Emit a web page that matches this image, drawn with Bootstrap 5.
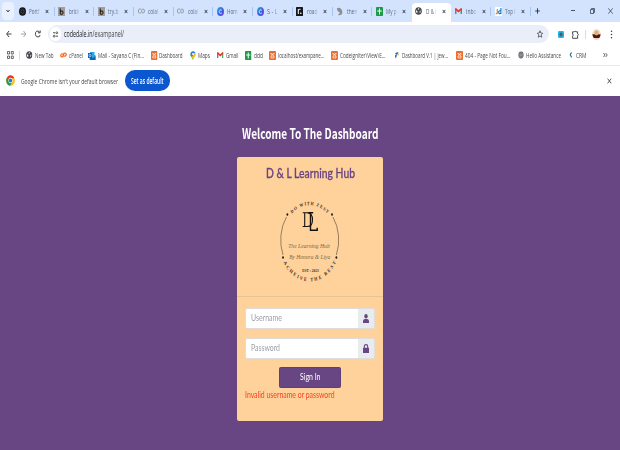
<!DOCTYPE html>
<html lang="en">
<head>
<meta charset="utf-8">
<meta name="viewport" content="width=device-width, initial-scale=1">
<title>D &amp; L Learning Hub</title>
<link rel="stylesheet" href="https://cdn.jsdelivr.net/npm/bootstrap@5.3.0/dist/css/bootstrap.min.css">
<style>
body{width:620px;height:450px;overflow:hidden;background:#684583;font:8px/10px "Open Sans","Noto Sans",sans-serif;color:#45484d}
svg{display:block;flex:none;overflow:visible}
.fit{display:block;flex:none;white-space:nowrap;text-align:left}
.fit>span{display:inline-block;transform-origin:0 50%;white-space:nowrap}
.tabstrip{height:22px;background:#d3e3fd}
.tabmenu{width:12px;height:18px;margin:0 1px 0 2px;border-radius:4px;background:#e9f0fe}
.btab{width:39.7px;height:18px;padding-left:3.5px;position:relative;flex:none}
.btab .fit{margin-left:3.5px;color:#566784;-webkit-mask-image:linear-gradient(90deg,#000 60%,#0004)}
.btab .cross{margin-left:5.5px}
.btab.line::after{content:"";width:1px;height:9px;background:#a9c5f3;position:absolute;right:0;top:5px}
.btab.current{background:#fff;border-radius:4px 4px 0 0;width:38.7px;margin-right:1px;height:19px;align-self:flex-end;padding-bottom:3px}
.toolbar-row{height:23px;background:#fff;padding-top:1px}
.address{width:501px;height:18px;margin-left:7px;border-radius:9px;background:#e9eef8}
.site{width:11px;height:14px;border-radius:7px;background:#fff;margin-left:2px}
.path-text{margin-left:2.5px;font-size:9px}
.path-text b{color:#202327}
.marks{height:21px;background:#fff;border-bottom:1px solid #e6e9ee;display:grid;align-items:center;padding-left:7px;
grid-template-columns:12px 7px 34px 28px 62.5px 39.5px 27px 28px 24px 62px 63px 61.5px 62px 51px 34px 10px}
.marks>div{display:flex;align-items:center;gap:2px}
.infobar{height:29.5px;background:#fff}
.setdef{width:45px;height:21px;border-radius:10px;background:#0b57d0;color:#fff;margin-left:7px}
.welcome{font:700 13.8px/18px "Noto Sans CJK SC",sans-serif;color:#fff;margin-top:28px}
.login{width:145.5px;height:264px;margin:15px auto 0 237.3px;background:#ffd29b;border-radius:2px;font-family:Lato,sans-serif}
.brand{height:140px;border-bottom:1px solid #e8c294}
.hub{font:500 12.5px/16px Lato,sans-serif;color:#684583;-webkit-text-stroke:.3px #684583;padding-top:9.5px}
.field{width:129.5px;height:21px;border:1px solid #dfdcda;border-radius:2px;background:#fff;font-size:9.5px;color:#999fa6;margin-left:8px;overflow:hidden}
.addon{width:16px;background:#e9ecef;color:#684583}
.field .fit{margin-left:4.5px}
.first{margin-top:11px}
.second{margin-top:9px}
.signin{width:62px;height:20.5px;border-radius:1.5px;background:#684583;border:1px solid #5f3f79;color:#fff;font-size:9.5px;margin:8.500px 0 0 41.5px}
.wrong{font-size:9.8px;line-height:12px;color:#fb3c20;margin:.5px 0 0 8px}
</style>
</head>
<body>
<svg width="0" height="0" class="position-absolute">
<defs>
<symbol id="x" viewBox="0 0 8 10"><path d="M1.400 1.800l5.200 6.400M6.600 1.800L1.400 8.200" stroke="#2c313a" stroke-width="1.700" fill="none"/></symbol>
<symbol id="globe" viewBox="0 0 14 16" preserveAspectRatio="none"><ellipse cx="7" cy="8" rx="6.700" ry="7.600" fill="#45494e"/><path d="M2.500 6l2.500 2.500v2.500l-1.500 1C2 10 2 8 2.500 6zM6.500 2.500h2l-1 2.500-2 1zM9.500 8l2-1-.7 4-1.500 1z" fill="#fff"/></symbol>
<symbol id="b" viewBox="0 0 14 18" preserveAspectRatio="none"><rect width="14" height="18" fill="#a39e98"/><path d="M4.500 3v11M4.500 9q5.500-3 5.500 2t-5.500 3" stroke="#1e1b1a" stroke-width="2.200" fill="none"/></symbol>
<symbol id="co" viewBox="0 0 16 12" preserveAspectRatio="none"><path d="M7 2.500Q1 0 1 6t6 3.500" fill="none" stroke="#8d9197" stroke-width="1.800"/><ellipse cx="11.500" cy="6" rx="3.300" ry="4" fill="none" stroke="#8d9197" stroke-width="1.800"/></symbol>
<linearGradient id="cg" x1="0" y1="0" x2="1" y2="1"><stop stop-color="#17b8d4"/><stop offset=".55" stop-color="#3f62e0"/><stop offset="1" stop-color="#7b2de0"/></linearGradient>
<symbol id="canva" viewBox="0 0 14 18" preserveAspectRatio="none"><ellipse cx="7" cy="9" rx="7" ry="9" fill="url(#cg)"/><path d="M9.500 6.500Q8 4 5.800 6.500T5.500 12t4.300-.5" fill="none" stroke="#fff" stroke-width="1.500"/></symbol>
<symbol id="sheet" viewBox="0 0 14 18" preserveAspectRatio="none"><rect width="14" height="18" rx="1.500" fill="#1e9a49"/><path d="M7 3v12M2.500 8h9" stroke="#fff" stroke-width="2"/></symbol>
<symbol id="gm" viewBox="0 0 14 13" preserveAspectRatio="none"><path d="M0 2v11h3V6z" fill="#4285f4"/><path d="M14 2v11h-3V6z" fill="#34a853"/><path d="M0 1l2-1 5 5 5-5 2 1v3L7 10 0 4z" fill="#e33b2e"/></symbol>
<symbol id="xm" viewBox="0 0 14 18" preserveAspectRatio="none"><rect width="14" height="18" rx="2" fill="#ec6d2d"/><path d="M4 4.500l6 4.500M10 4.500L4 9M4 4v3M10 4v3M4 10h6v4H4z" stroke="#fff" stroke-width="1.300" fill="none"/></symbol>
</defs></svg>

<header>
<div class="tabstrip d-flex align-items-center">
 <div class="tabmenu d-flex align-items-center justify-content-center"><svg width="4" height="4" viewBox="0 0 4 4"><path d="M.5 1L2 2.800 3.500 1" fill="none" stroke="#1f2329" stroke-width="1"/></svg></div>
 <div class="btab line d-flex align-items-center"><svg width="7" height="9" viewBox="0 0 7 9"><ellipse cx="3.500" cy="4.500" rx="3.500" ry="4.300" fill="#15181c"/><ellipse cx="3.500" cy="4.500" rx="1.500" ry="2" fill="none" stroke="#596069" stroke-width=".6"/></svg><div class="fit" data-w="10.500">Portf</div><svg class="cross" width="4" height="5"><use href="#x"/></svg></div>
 <div class="btab line d-flex align-items-center"><svg width="7" height="9"><use href="#b"/></svg><div class="fit" data-w="10.500">brick</div><svg class="cross" width="4" height="5"><use href="#x"/></svg></div>
 <div class="btab line d-flex align-items-center"><svg width="7" height="9"><use href="#b"/></svg><div class="fit" data-w="10.500">try.b</div><svg class="cross" width="4" height="5"><use href="#x"/></svg></div>
 <div class="btab line d-flex align-items-center"><svg width="7" height="6"><use href="#co"/></svg><div class="fit" data-w="10.500">colal</div><svg class="cross" width="4" height="5"><use href="#x"/></svg></div>
 <div class="btab line d-flex align-items-center"><svg width="7" height="6"><use href="#co"/></svg><div class="fit" data-w="10.500">colal</div><svg class="cross" width="4" height="5"><use href="#x"/></svg></div>
 <div class="btab line d-flex align-items-center"><svg width="7" height="9"><use href="#canva"/></svg><div class="fit" data-w="10.500">Hom</div><svg class="cross" width="4" height="5"><use href="#x"/></svg></div>
 <div class="btab line d-flex align-items-center"><svg width="7" height="9"><use href="#canva"/></svg><div class="fit" data-w="10.500">S - L</div><svg class="cross" width="4" height="5"><use href="#x"/></svg></div>
 <div class="btab line d-flex align-items-center"><svg width="7" height="9" viewBox="0 0 7 9"><rect width="7" height="9" rx=".6" fill="#16191d"/><path d="M2.300 2v5M2.300 3.200Q3 2 4.500 2.300" stroke="#fff" fill="none"/><circle cx="4.800" cy="6.300" r=".8" fill="#fff"/></svg><div class="fit" data-w="10.500">road</div><svg class="cross" width="4" height="5"><use href="#x"/></svg></div>
 <div class="btab line d-flex align-items-center"><svg width="7" height="9" viewBox="0 0 7 9"><path d="M.8 1.500Q3-.3 5 1.800 7 4 6.300 6.500 5 9 2 8l2-2.500Q2 5 1.500 3.800z" fill="#8c8f93"/></svg><div class="fit" data-w="10.500">then</div><svg class="cross" width="4" height="5"><use href="#x"/></svg></div>
 <div class="btab d-flex align-items-center"><svg width="7" height="9"><use href="#sheet"/></svg><div class="fit" data-w="10.500">My p</div><svg class="cross" width="4" height="5"><use href="#x"/></svg></div>
 <div class="btab current d-flex align-items-center"><svg width="7" height="8"><use href="#globe"/></svg><div class="fit" data-w="10.500">D &amp; l</div><svg class="cross" width="4" height="5"><use href="#x"/></svg></div>
 <div class="btab line d-flex align-items-center"><svg width="7" height="6"><use href="#gm"/></svg><div class="fit" data-w="10.500">Inbo</div><svg class="cross" width="4" height="5"><use href="#x"/></svg></div>
 <div class="btab line d-flex align-items-center"><svg width="7" height="9" viewBox="0 0 7 9"><rect width="7" height="9" rx="1" fill="#fff"/><path d="M2.300 2v4Q2 7 .7 6.500" stroke="#f37a20" stroke-width="1.200" fill="none"/><path d="M5.900 1v6M5.900 4Q3.600 3.300 3.600 5.200T5.900 6.500" stroke="#1274c0" stroke-width="1.100" fill="none"/></svg><div class="fit" data-w="10.500">Top I</div><svg class="cross" width="4" height="5"><use href="#x"/></svg></div>
 <svg class="ms-1" width="5" height="6" viewBox="0 0 5 6"><path d="M2.500 .3v5.400M.2 3h4.600" stroke="#2c313a" stroke-width=".9"/></svg>
 <svg class="ms-auto" width="4" height="6" viewBox="0 0 4 6"><path d="M0 2.500h4" stroke="#2c313a" stroke-width=".8"/></svg>
 <svg style="margin-left:15px" width="5" height="6" viewBox="0 0 5 6"><path d="M.5 1.500h3v4h-3zM1.500 1.200V.5h3v4h-.8" stroke="#2c313a" stroke-width=".7" fill="none"/></svg>
 <svg style="margin:0 7px 0 13px" width="5" height="6" viewBox="0 0 5 6"><path d="M.3 .3l4.400 5.400M4.700 .3L.3 5.700" stroke="#2c313a" stroke-width=".7"/></svg>
</div>

<div class="toolbar-row d-flex align-items-center">
 <svg width="41" height="10" viewBox="0 0 41 10" fill="none" stroke-width="1"><path d="M11.500 5H6.800M9 2L6.700 5 9 8" stroke="#3e4247"/><path d="M21 5h4.800M23.500 2l2.300 3-2.300 3" stroke="#a0a3a8"/><path d="M39.700 3.200Q38 1.300 36.500 2.300 35.200 3.200 35.400 5.500 36 8.200 38 8T40 6M40.200 1.500v2.300h-2.300" stroke="#3e4247"/></svg>
 <div class="address d-flex align-items-center"><div class="site d-flex align-items-center justify-content-center"><svg width="5" height="7" viewBox="0 0 5 7"><path d="M0 1.800h2.200M2.800 5.200H5" stroke="#33373c" stroke-width=".9"/><circle cx="3.800" cy="1.800" r=".9" fill="none" stroke="#33373c" stroke-width=".8"/><circle cx="1.200" cy="5.200" r=".9" fill="none" stroke="#33373c" stroke-width=".8"/></svg></div>
 <div class="fit path-text" data-w="60"><b class="fw-normal">codedale.in</b>/exampanel/</div>
 <svg class="ms-auto" style="margin-right:6px" width="6" height="8" viewBox="0 0 12 16"><path d="M6 1.500l1.500 4.500 4 .4-3 3.200 1 4.900L6 12l-3.500 2.500 1-4.900-3-3.200 4-.4z" fill="none" stroke="#33373c" stroke-width="1.400"/></svg></div>
 <svg style="margin-left:8.500px" width="6" height="7" viewBox="0 0 6 7"><rect width="6" height="7" rx="1.200" fill="#21b5e8"/><ellipse cx="3" cy="3.600" rx="1.600" ry="2" fill="#5c5560"/></svg>
 <svg style="margin-left:8px" width="7" height="9" viewBox="0 0 7 9"><path d="M.6 1.800h1.800Q3 .2 4 1.800h1.600v2Q7 4.500 5.600 5.800v2.500h-5V6.200Q2 5 .6 4z" fill="none" stroke="#33373c" stroke-width=".9"/></svg>
 <div style="width:1px;height:9px;background:#cfdcf3;margin:0 6px"></div>
 <svg width="9" height="11" viewBox="0 0 9 11"><defs><clipPath id="av"><ellipse cx="4.500" cy="5.500" rx="4.300" ry="5.400"/></clipPath></defs><g clip-path="url(#av)"><rect width="9" height="11" fill="#f4ddb7"/><path d="M0 5.500Q4.500 4.500 9 5.500L7 9.500H2z" fill="#4d1419"/><ellipse cx="4.500" cy="4" rx="2.200" ry="2.400" fill="#dcae86"/><path d="M2 9h5v2H2z" fill="#f1d2c5"/></g></svg>
 <svg style="margin-left:9px" width="3" height="9" viewBox="0 0 3 9"><g fill="#33373c"><circle cx="1.500" cy="1.200" r=".75"/><circle cx="1.500" cy="4.500" r=".75"/><circle cx="1.500" cy="7.800" r=".75"/></g></svg>
</div>

<nav class="marks">
 <div><svg width="7" height="8" viewBox="0 0 7 8"><path d="M.5.5h2v2.500h-2zM4.300.5h2v2.500h-2zM.5 5h2v2.500h-2zM4.300 5h2v2.500h-2z" fill="none" stroke="#44484d" stroke-width=".8"/></svg></div>
 <div><i style="width:1px;height:9px;background:#cfdcf3"></i></div>
 <div><svg width="6.500" height="8"><use href="#globe"/></svg><div class="fit" data-w="18.500">New Tab</div></div>
 <div><svg width="7" height="8" viewBox="0 0 7 8"><path d="M3 3Q1 2.300.8 4.300T2.800 5.800L4 2.300Q6.300 1.500 6.200 3.500T3.800 5" fill="none" stroke="#fb6a21" stroke-width="1.300"/></svg><div class="fit" data-w="14">cPanel</div></div>
 <div><svg width="7.500" height="9" viewBox="0 0 7.500 9"><path d="M2 1h4.500v3h1v5H1.500z" fill="#28a8ea"/><path d="M2 5l3 2 2.500-2v4H2z" fill="#1066b5"/><rect y="2" width="4" height="5" fill="#0a62bc"/><ellipse cx="2" cy="4.500" rx="1" ry="1.300" stroke="#fff" stroke-width=".6" fill="none"/></svg><div class="fit" data-w="46">Mail - Sayana C (Fin...</div></div>
 <div><svg width="6.500" height="9"><use href="#xm"/></svg><div class="fit" data-w="23.500">Dashboard</div></div>
 <div><svg width="6" height="9" viewBox="0 0 6 9"><path d="M3 9L1.500 6Q-.5 3.500.7 1.500L3 3z" fill="#1da653"/><path d="M.7 1.600Q3-1 5.300 1.500L3 4z" fill="#2a79ee"/><path d="M5.300 1.500Q6.500 4 4.500 6L3 9 1.700 6z" fill="#f5b91b"/><circle cx="3" cy="3" r="1" fill="#fff"/></svg><div class="fit" data-w="12">Maps</div></div>
 <div><svg width="6.500" height="6"><use href="#gm"/></svg><div class="fit" data-w="12.500">Gmail</div></div>
 <div><svg width="6.500" height="9"><use href="#sheet"/></svg><div class="fit" data-w="9">ddd</div></div>
 <div><svg width="7" height="9"><use href="#xm"/></svg><div class="fit" data-w="46.500">localhost/exampane...</div></div>
 <div><svg width="7" height="9"><use href="#xm"/></svg><div class="fit" data-w="45.500">CodeIgniter\View\E...</div></div>
 <div><svg width="6" height="8" viewBox="0 0 6 8"><path d="M1 3Q2 .5 4.500 1.500L3 4z" fill="#1576b8"/><path d="M3 3.500l2-1.500-.6 3z" fill="#f6b72a"/><path d="M1 4l2 .5L1.500 7.500z" fill="#174d76"/></svg><div class="fit" data-w="46">Dashboard V.1 | jew...</div></div>
 <div><svg width="7" height="9"><use href="#xm"/></svg><div class="fit" data-w="45.500">404 - Page Not Fou...</div></div>
 <div><svg width="6" height="8" viewBox="0 0 6 8"><ellipse cx="3" cy="4" rx="2.600" ry="3.400" fill="#62666b"/><path d="M3 1v6M.7 4h4.600M1.500 2Q3 4 1.500 6M4.500 2Q3 4 4.500 6" fill="none" stroke="#c7c9cb" stroke-width=".35"/></svg><div class="fit" data-w="35">Hello Assistance</div></div>
 <div><svg width="5" height="6" viewBox="0 0 5 6"><path d="M3 .8Q.8 1.500 1.500 3.200T3 5.200" fill="none" stroke="#277a8e" stroke-width="1.200"/></svg><div class="fit" data-w="10.500">CRM</div></div>
 <div><svg width="5" height="6" viewBox="0 0 5 6"><path d="M.5 1l1.500 2L.5 5M2.700 1l1.500 2-1.500 2" fill="none" stroke="#44484d" stroke-width=".8"/></svg></div>
</nav>

<div class="infobar d-flex align-items-center">
 <svg style="margin:0 6px 0 6px" width="9" height="11" viewBox="0 0 9 11"><g transform="scale(.9 1.100)"><circle cx="5" cy="5" r="4.800" fill="#fbc116"/><path d="M5 5L.8 2.700A4.800 4.800 0 0 1 9.300 2.900H5z" fill="#e33b2e"/><path d="M5 5L.8 2.600A4.800 4.800 0 0 0 4.600 9.800L7 6z" fill="#229a48"/><circle cx="5" cy="5" r="2.400" fill="#fff"/><circle cx="5" cy="5" r="1.800" fill="#1a73e8"/></g></svg>
 <div class="fit" data-w="97">Google Chrome isn't your default browser</div>
 <div class="setdef d-flex align-items-center justify-content-center"><div class="fit fw-semibold" data-w="32.500">Set as default</div></div>
 <svg class="ms-auto" style="margin-right:8px" width="5" height="6" viewBox="0 0 5 6"><path d="M.6 .6l3.600 4.800M4.200 .6L.6 5.400" stroke="#33373c" stroke-width=".8"/></svg>
</div>
</header>

<main>
<div class="welcome d-flex justify-content-center"><div class="fit" data-w="136.500">Welcome To The Dashboard</div></div>
<section class="login">
 <div class="brand">
  <div class="hub d-flex justify-content-center"><div class="fit" data-w="89">D &amp; L Learning Hub</div></div>
  <svg width="145" height="100" viewBox="237.300 182 145 100">
   <g transform="translate(310 241) scale(.762 1)" font-family="Liberation Serif,serif" fill="#33291d">
    <path id="up" d="M-36 0A36 36 0 0 1 36 0" fill="none"/>
    <path id="down" d="M-40.500 0A40.500 40.500 0 0 0 40.500 0" fill="none"/>
    <path d="M-30.500-24A38.500 38.500 0 0 0-35 14M30.500-24A38.500 38.500 0 0 1 35 14" fill="none" stroke="#6b573d" stroke-width=".8"/>
    <g fill="#1d1812"><circle cx="-29.300" cy="-26.500" r="1.200"/><circle cx="29.300" cy="-26.500" r="1.200"/><circle cx="-35" cy="16.500" r="1.200"/><circle cx="35" cy="16.500" r="1.200"/></g>
    <text font-size="5" font-weight="700" textLength="51"><textPath href="#up" startOffset="50%" text-anchor="middle" textLength="51">DO WITH ZEST</textPath></text>
    <text font-size="5.300" font-weight="700" textLength="82"><textPath href="#down" startOffset="50%" text-anchor="middle" textLength="82">ACHEIVE THE BEST</textPath></text>
   </g>
   <g fill="none" stroke="#15110c"><path d="M303 212.800h5M303 226.500h5M305 213V226.500" stroke-width="1.100"/><path d="M307.500 212.800Q312.800 213 312.800 219.800T307.500 226.500" stroke-width="1.100"/><path d="M308.500 212.800h5M310.800 213v17.200h6.700v-2.500" stroke-width="1.400"/></g>
   <g font-family="Liberation Serif,serif" font-style="italic" font-size="6.500" fill="#7d6649"><text x="288.500" y="248.300" textLength="41.500" lengthAdjust="spacingAndGlyphs">The Learning Hub</text><text x="289.500" y="259.300" textLength="41" lengthAdjust="spacingAndGlyphs">By Honora &amp; Liya</text></g>
   <text x="302.500" y="272" font-family="Liberation Serif,serif" font-weight="700" font-size="4" textLength="16.500" lengthAdjust="spacingAndGlyphs" fill="#3b2e20">EST : 2023</text>
  </svg>
 </div>
 <div class="field first d-flex align-items-stretch"><div class="fit align-self-center" data-w="31">Username</div><div class="addon ms-auto d-flex align-items-center justify-content-center"><svg width="6" height="9" viewBox="0 0 6 9"><ellipse cx="3" cy="2.300" rx="1.700" ry="2.200" fill="currentColor"/><path d="M0 9V7Q.2 5 2 5h2q1.800 0 2 2v2z" fill="currentColor"/></svg></div></div>
 <div class="field second d-flex align-items-stretch"><div class="fit align-self-center" data-w="29">Password</div><div class="addon ms-auto d-flex align-items-center justify-content-center"><svg width="6" height="9" viewBox="0 0 6 9"><rect y="3.800" width="6" height="5.200" rx=".6" fill="currentColor"/><path d="M1.300 4V2.500Q1.300.6 3 .6t1.700 1.900V4" fill="none" stroke="currentColor" stroke-width="1.100"/></svg></div></div>
 <div class="signin d-flex align-items-center justify-content-center"><div class="fit" data-w="20.500">Sign In</div></div>
 <div class="wrong fit" data-w="89.500">Invalid username or password</div>
</section>
</main>
<script>
// Squeeze every label horizontally to its own column width.
document.querySelectorAll('.fit').forEach(function(el){
  var s=document.createElement('span');
  while(el.firstChild)s.appendChild(el.firstChild);
  el.appendChild(s);
  var w=parseFloat(el.dataset.w),n=s.getBoundingClientRect().width;
  s.style.transform='scaleX('+w/n+')';
  el.style.width=w+'px';
});
</script>
<script src="https://cdn.jsdelivr.net/npm/bootstrap@5.3.0/dist/js/bootstrap.bundle.min.js"></script>
</body>
</html>
